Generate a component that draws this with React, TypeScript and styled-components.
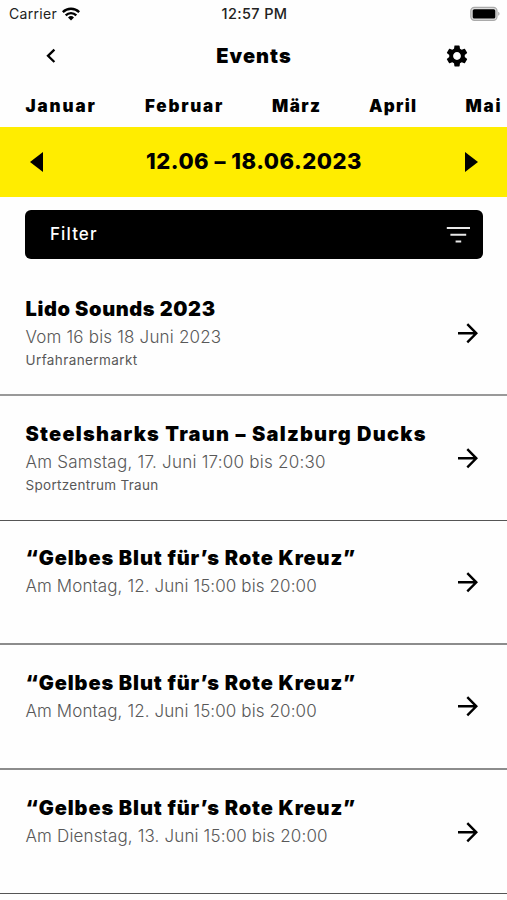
import React from 'react';
import styled, { createGlobalStyle } from 'styled-components';
import { MdSettings } from 'react-icons/md';

const GlobalStyle = createGlobalStyle`
  * { box-sizing: border-box; }
  body { margin: 0; background: #fefefe; color: #000; font-family: Inter, 'Open Sans', sans-serif; }
  button { border: 0; padding: 0; background: none; color: inherit; font: inherit; display: flex; }
  svg { display: block; flex: none; }
`;

const Screen = styled.main`
  width: 507px;
  height: 900px;
  overflow: hidden;
  display: flex;
  flex-direction: column;
`;

const Spaced = styled.span<{ $ls: number }>`
  letter-spacing: ${p => p.$ls}px;
  white-space: nowrap;
`;

const StatusBar = styled.div`
  height: 27px;
  flex: none;
  display: grid;
  grid-template-columns: 1fr auto 1fr;
  align-items: center;
  padding: 0 7px 0 9px;
  font-size: 14px;
  color: #222;
`;

const Carrier = styled.div`
  display: flex;
  align-items: center;
  gap: 5px;
`;

const Clock = styled(Spaced)`
  font-size: 14.5px;
  font-weight: 500;
`;

const BatterySlot = styled.div`
  display: flex;
  justify-content: flex-end;
`;

const Header = styled.header`
  height: 57px;
  flex: none;
  display: grid;
  grid-template-columns: 1fr auto 1fr;
  align-items: center;
  padding: 1px 37px 0 38px;
`;

const BackButton = styled.button`
  && {
    padding-left: 7px;
  }
`;

const Title = styled.h1`
  margin: 0;
  font-size: 20px;
  font-weight: 900;
  letter-spacing: 1px;
`;

const SettingsButton = styled.button`
  justify-self: end;
`;

const Months = styled.nav`
  height: 42.5px;
  flex: none;
  display: flex;
  align-items: center;
  padding: 1px 0 0 25.5px;
  font-size: 17px;
  font-weight: 900;
`;

const Month = styled(Spaced)<{ $w: number }>`
  flex: none;
  width: ${p => p.$w}px;
`;

const Week = styled.section`
  height: 70.5px;
  flex: none;
  background: #ffed00;
  display: flex;
  align-items: center;
  justify-content: space-between;
  padding: 0 28.5px 0 29.5px;
`;

const WeekLabel = styled(Spaced)`
  font-size: 22px;
  font-weight: 800;
  padding-bottom: 2px;
`;

const Filter = styled.button`
  && {
    display: flex;
    align-items: center;
    justify-content: space-between;
    flex: none;
    height: 49px;
    margin: 13px 24.5px 0 25px;
    padding: 0 12px 0 25px;
    border-radius: 6px;
    background: #000;
    color: #fff;
    font-size: 17px;
    font-weight: 500;
  }
`;

const FilterLabel = styled(Spaced)`
  padding-bottom: 2px;
`;

const EventList = styled.ul`
  list-style: none;
  margin: 12.4px 0 0;
  padding: 0;
`;

const EventRow = styled.li<{ $thick: boolean; $line: string }>`
  height: 124.6px;
  display: flex;
  align-items: center;
  justify-content: space-between;
  padding: 0 28px 0 25.5px;
  border-bottom: ${p => (p.$thick ? 2 : 1)}px solid ${p => p.$line};
`;

const Details = styled.div`
  align-self: stretch;
  display: flex;
  flex-direction: column;
  align-items: flex-start;
  padding-top: 22.8px;
  color: #585858;
`;

const Name = styled(Spaced)`
  font-size: 20px;
  font-weight: 900;
  line-height: 30px;
  color: #000;
`;

const When = styled(Spaced)`
  font-size: 17px;
  font-weight: 300;
  line-height: 26px;
`;

const Place = styled(Spaced)`
  font-size: 13.5px;
  font-weight: 400;
  line-height: 20px;
`;

const Wifi = () => (
  <svg width="18" height="14" viewBox="0 0 18 14" fill="none" stroke="#000" strokeWidth="2.4">
    <path d="M.8 5.1a11.7 11.7 0 0 1 16.4 0" />
    <path d="M3.7 8.3a7.5 7.5 0 0 1 10.6 0" />
    <path d="M6 10.5a4.3 4.3 0 0 1 6 0L9 13.5Z" fill="#000" stroke="none" />
  </svg>
);

const Battery = () => (
  <svg width="30" height="16" viewBox="0 0 30 16">
    <rect x=".8" y="1.3" width="26.2" height="13" rx="3.6" fill="#ddd" stroke="#aaa" strokeWidth="1.2" />
    <rect x="2.7" y="3.2" width="22.6" height="9.4" rx="1.6" fill="#000" />
    <path d="M28.2 5.8c1.8.6 1.8 3.4 0 4Z" fill="#aaa" />
  </svg>
);

const Back = () => (
  <svg width="12" height="16" viewBox="0 0 12 16" fill="none" stroke="#000" strokeWidth="2.3">
    <path d="M9.4 1.6 3 7.8l6.4 6.2" />
  </svg>
);

const Triangle = ({ next = false }: { next?: boolean }) => (
  <svg width="13" height="20" viewBox="0 0 13 20">
    <path d={next ? 'M0 0v20l13-10Z' : 'M13 0v20L0 10Z'} />
  </svg>
);

const FilterLines = () => (
  <svg width="25" height="20" viewBox="0 0 25 20" stroke="#e8e8e8" strokeWidth="2">
    <path d="M.8 3h23.2M4.4 9.7h15.8M9.6 16.4h5.6" />
  </svg>
);

const Arrow = () => (
  <svg width="22" height="22" viewBox="0 0 22 22" fill="none" stroke="#000" strokeWidth="2.4">
    <path d="M1 11.3h18.5M10.3 2.2l9 9.1-9 9.1" />
  </svg>
);

const months = [
  { name: 'Januar', w: 119.5, ls: 1.9 },
  { name: 'Februar', w: 127, ls: 1.75 },
  { name: 'März', w: 97, ls: 1.4 },
  { name: 'April', w: 96.5, ls: 1.3 },
  { name: 'Mai', w: 42, ls: 1.8 },
];

const events = [
  { name: 'Lido Sounds 2023', ls: 0.6, when: 'Vom 16 bis 18 Juni 2023', wls: 0.18, place: 'Urfahranermarkt', pls: 0.4, thick: true, line: '#999' },
  { name: 'Steelsharks Traun – Salzburg Ducks', ls: 1.25, when: 'Am Samstag, 17. Juni 17:00 bis 20:30', wls: 0.24, place: 'Sportzentrum Traun', pls: 0.31, thick: false, line: '#555' },
  { name: '“Gelbes Blut für’s Rote Kreuz”', ls: 0.87, when: 'Am Montag, 12. Juni 15:00 bis 20:00', wls: 0.1, thick: true, line: '#8c8c8c' },
  { name: '“Gelbes Blut für’s Rote Kreuz”', ls: 0.87, when: 'Am Montag, 12. Juni 15:00 bis 20:00', wls: 0.1, thick: true, line: '#8c8c8c' },
  { name: '“Gelbes Blut für’s Rote Kreuz”', ls: 0.87, when: 'Am Dienstag, 13. Juni 15:00 bis 20:00', wls: 0.15, thick: false, line: '#555' },
];

export default function App() {
  return (
    <Screen>
      <GlobalStyle />
      <StatusBar>
        <Carrier><Spaced $ls={0.3}>Carrier</Spaced><Wifi /></Carrier>
        <Clock $ls={0.35}>12:57 PM</Clock>
        <BatterySlot><Battery /></BatterySlot>
      </StatusBar>
      <Header>
        <BackButton aria-label="Zurück"><Back /></BackButton>
        <Title>Events</Title>
        <SettingsButton aria-label="Einstellungen"><MdSettings size={26} /></SettingsButton>
      </Header>
      <Months>
        {months.map(m => <Month key={m.name} $w={m.w} $ls={m.ls}>{m.name}</Month>)}
      </Months>
      <Week>
        <button aria-label="Vorige Woche"><Triangle /></button>
        <WeekLabel $ls={0.5}>12.06 – 18.06.2023</WeekLabel>
        <button aria-label="Nächste Woche"><Triangle next /></button>
      </Week>
      <Filter><FilterLabel $ls={1.1}>Filter</FilterLabel><FilterLines /></Filter>
      <EventList>
        {events.map((e, i) => (
          <EventRow key={i} $thick={e.thick} $line={e.line}>
            <Details>
              <Name $ls={e.ls}>{e.name}</Name>
              <When $ls={e.wls}>{e.when}</When>
              {e.place && <Place $ls={e.pls}>{e.place}</Place>}
            </Details>
            <Arrow />
          </EventRow>
        ))}
      </EventList>
    </Screen>
  );
}
